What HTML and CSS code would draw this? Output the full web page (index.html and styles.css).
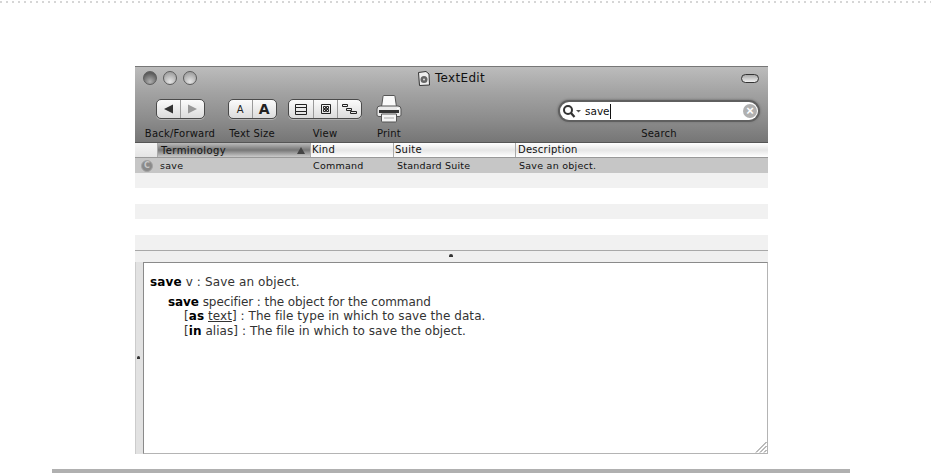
FILE: index.html
```html
<!DOCTYPE html>
<html lang="en">
<head>
<meta charset="utf-8">
<title>TextEdit</title>
<link rel="stylesheet" href="styles.css">
</head>
<body>
<div class="dots"></div>
<div class="window">
  <div class="toolbar">
    <div class="titlebar">
      <div class="lights"><i class="light red"></i><i class="light"></i><i class="light"></i></div>
      <div class="title">
        <svg class="doc" width="13" height="15" viewBox="0 0 13 15"><path d="M1.500 1.500 9 .5l3 2.500.5 11-10 .5z" fill="#eee" stroke="#333"/><circle cx="7" cy="8.500" r="3.500" fill="#666"/><circle cx="7" cy="8.500" r="1" fill="#ddd"/></svg>
        <span>TextEdit</span>
      </div>
      <div class="pill"></div>
    </div>
    <div class="tools">
      <div class="tool t-back">
        <div class="seg">
          <div class="cell c-nav"><svg width="11" height="10" viewBox="0 0 11 10"><path d="M1 5l9-4.500v9z" fill="#333"/></svg></div>
          <div class="cell c-nav"><svg width="11" height="10" viewBox="0 0 11 10"><path d="M10 5L1 .5v9z" fill="#999"/></svg></div>
        </div>
        <span class="label">Back/Forward</span>
      </div>
      <div class="tool t-size">
        <div class="seg">
          <div class="cell c-a small">A</div>
          <div class="cell c-a big">A</div>
        </div>
        <span class="label">Text Size</span>
      </div>
      <div class="tool t-view">
        <div class="seg">
          <div class="cell c-view"><svg width="12" height="13" viewBox="0 0 12 13" fill="none" stroke="#222"><path d="M.5 1.500h11v3H.5zM.5 4.500h11v4H.5zM.5 8.500h11v3H.5z"/></svg></div>
          <div class="cell c-view"><svg width="12" height="12" viewBox="0 0 12 12" fill="none" stroke="#222"><path d="M1.500 1.500h9v9h-9zM3.500 3.500h2v2h-2zM6.500 3.500h2v2h-2zM3.500 6.500h2v2h-2zM6.500 6.500h2v2h-2z"/></svg></div>
          <div class="cell c-view"><svg width="15" height="12" viewBox="0 0 15 12" fill="none" stroke="#222"><path d="M.5 1.500h5v2h-5zM4.500 5.500h5v2h-5zM8.500 8.500h6v2h-6z"/></svg></div>
        </div>
        <span class="label">View</span>
      </div>
      <div class="tool t-print">
        <svg class="printer" width="26" height="28" viewBox="0 0 26 28">
          <path d="M7 1.500q0-1 1-1h10q1 0 1 1L20.500 12h-15z" fill="#fafafa" stroke="#555"/>
          <path d="M1 14q0-3 3-3h18q3 0 3 3v6q0 1.500-2 1.500H3q-2 0-2-1.500z" fill="#eaeaea" stroke="#555"/>
          <path d="M3 15h20v3H3z" fill="#333"/>
          <path d="M21 13h2v1h-2z" fill="#fff"/>
          <path d="M5.500 19h15v7q0 1-1 1h-13q-1 0-1-1z" fill="#f4f4f4" stroke="#555"/>
          <path d="M8 23h10" stroke="#aaa"/>
        </svg>
        <span class="label">Print</span>
      </div>
      <div class="tool t-search">
        <div class="search">
          <svg class="glass" width="20" height="14" viewBox="0 0 20 14"><circle cx="6" cy="6" r="4" fill="none" stroke="#333" stroke-width="2"/><path d="M9 9l3.500 4" stroke="#333" stroke-width="2.200"/><path d="M14 6h5l-2.500 2.500z" fill="#555"/></svg>
          <span class="query">save</span>
          <span class="clear">×</span>
        </div>
        <span class="label">Search</span>
      </div>
    </div>
  </div>
  <div class="thead">
    <div class="th th-icon"></div>
    <div class="th th-term"><span>Terminology</span><i class="sort"></i></div>
    <div class="th th-kind">Kind</div>
    <div class="th th-suite">Suite</div>
    <div class="th th-desc">Description</div>
  </div>
  <div class="rows">
    <div class="row selected">
      <div class="td td-icon"><i class="badge">C</i></div>
      <div class="td td-term">save</div>
      <div class="td td-kind">Command</div>
      <div class="td td-suite">Standard Suite</div>
      <div class="td td-desc">Save an object.</div>
    </div>
    <div class="row alt"></div>
    <div class="row"></div>
    <div class="row alt"></div>
    <div class="row"></div>
    <div class="row alt"></div>
  </div>
  <div class="split-h"><i class="dimple"></i></div>
  <div class="lower">
    <div class="split-v"><i class="dimple"></i></div>
    <div class="doc-pane">
      <p class="head"><b>save</b> v : Save an object.</p>
      <p class="param"><b>save</b> specifier : the object for the command</p>
      <p class="opt">[<b>as</b> <u>text</u>] : The file type in which to save the data.</p>
      <p class="opt">[<b>in</b> alias] : The file in which to save the object.</p>
      <svg class="grip" width="12" height="12" viewBox="0 0 12 12" stroke="#777" fill="none"><path d="M1 11.500L11.500 1M5 11.500L11.500 5M9 11.500l2.500-2.500"/></svg>
    </div>
  </div>
</div>
<div class="rule"></div>
</body>
</html>
```

FILE: styles.css
```css
* { box-sizing: border-box; }
html, body { margin: 0; padding: 0; background: #fff; }
body { width: 931px; height: 473px; overflow: hidden; font-family: "DejaVu Sans", sans-serif; color: #222; }
.dots { height: 3px; margin-top: 1px; background: repeating-linear-gradient(90deg, #d6d6d6 0 2px, transparent 2px 6px); background-size: 100% 2px; background-repeat: no-repeat; }
.window { width: 633px; height: 388px; margin: 62px 0 0 135px; display: flex; flex-direction: column; }
.toolbar { height: 76px; flex: none; background: linear-gradient(#bcbcbc, #a2a2a2 35%, #8c8c8c 70%, #767676); border-top: 1px solid #777; }
.titlebar { height: 22px; display: flex; align-items: center; justify-content: space-between; padding: 0 9px 0 8px; }
.lights { display: flex; gap: 6px; width: 56px; }
.light { width: 14px; height: 14px; border-radius: 50%; border: 1px solid #5c5c5c; background: radial-gradient(circle at 50% 80%, #e4e4e4, #a4a4a4 75%); }
.light.red { background: radial-gradient(circle at 50% 80%, #b0b0b0, #5c5c5c 75%); }
.title { display: flex; align-items: center; gap: 5px; font-size: 12px; letter-spacing: .3px; color: #111; }
.pill { width: 18px; height: 9px; margin-left: 38px; border: 1px solid #333; border-radius: 5px; background: linear-gradient(#a8a8a8, #f0f0f0); }
.tools { display: flex; height: 53px; }
.tool { display: flex; flex-direction: column; align-items: center; flex: none; }
.t-back { width: 76px; margin-left: 7px; }
.t-size { width: 60px; margin-left: 4px; }
.t-view { width: 74px; margin-left: 6px; }
.t-print { width: 40px; margin-left: 7px; }
.t-search { width: 206px; margin-left: 147px; }
.seg { height: 20px; margin-top: 10px; display: flex; border: 1px solid #4a4a4a; border-radius: 5px; background: linear-gradient(#fbfbfb, #dcdcdc); overflow: hidden; box-shadow: 0 1px 0 #b4b4b4; }
.cell { display: flex; align-items: center; justify-content: center; border-left: 1px solid #999; }
.cell:first-child { border-left: 0; }
.c-nav { width: 23.500px; }
.c-a { width: 23.500px; color: #222; }
.small { font-size: 10px; }
.big { font-size: 14px; font-weight: bold; }
.c-view { width: 24px; }
.label { font-size: 10px; line-height: 13px; margin-top: 8px; color: #111; white-space: nowrap; letter-spacing: .2px; }
.printer { margin-top: 6px; }
.t-print .label { margin-top: 4px; }
.search { width: 198px; height: 18px; margin-top: 13px; display: flex; align-items: center; padding: 0 1px 0 2px; background: #fff; border-radius: 9px; box-shadow: 0 0 0 2px #5f5f5f, 0 0 2px 3px #808080; }
.glass { flex: none; }
.query { font-size: 10.500px; color: #111; margin-left: 3px; border-right: 1px solid #111; line-height: 15px; flex: none; }
.clear { margin-left: auto; width: 14px; height: 14px; border-radius: 50%; background: #b0b0b0; color: #fff; font-size: 13px; font-weight: bold; line-height: 14px; text-align: center; font-family: "Liberation Sans", sans-serif; }
.t-search .label { margin-top: 7px; }
.thead { height: 16px; flex: none; display: flex; background: linear-gradient(#fff, #e6e6e6 50%, #fff); border-bottom: 1px solid #999; border-top: 1px solid #555; }
.th { font-size: 10px; line-height: 13px; padding-left: 1px; border-right: 1px solid #aaa; color: #111; flex: none; letter-spacing: .25px; }
.th-icon { width: 23px; padding: 0; background: linear-gradient(#f4f4f4, #e4e4e4); }
.th-term { width: 153px; display: flex; justify-content: space-between; align-items: center; background: linear-gradient(#bbb, #777 50%, #ccc); padding: 0 5px 0 3px; letter-spacing: .4px; }
.sort { width: 0; height: 0; border-left: 4px solid transparent; border-right: 4px solid transparent; border-bottom: 7px solid #444; }
.th-kind { width: 83px; }
.th-suite { width: 122px; }
.th-desc { flex: 1; border-right: 0; padding-left: 2px; }
.rows { height: 92px; flex: none; background: #fff; }
.row { height: 15.400px; display: flex; }
.row.alt { background: #f1f1f1; }
.row.selected { background: #c6c6c6; height: 15px; }
.td { font-size: 9.500px; line-height: 15px; padding-left: 2px; color: #111; white-space: nowrap; letter-spacing: .25px; flex: none; }
.td-icon { width: 23px; padding: 0 0 0 6px; display: flex; align-items: center; }
.td-term { width: 153px; }
.td-kind { width: 83px; }
.td-suite { width: 122px; padding-left: 3px; letter-spacing: .2px; }
.td-desc { padding-left: 3px; }
.badge { width: 12px; height: 12px; border-radius: 50%; background: #8a8a8a; border: 1px solid #a4a4a4; color: #c8c8c8; font-style: normal; font-size: 8px; line-height: 10px; text-align: center; font-weight: bold; }
.split-h { height: 12px; flex: none; background: #efefef; border-top: 1px solid #a8a8a8; display: flex; justify-content: center; }
.dimple { width: 4px; height: 3px; background: #333; border-radius: 2px 2px 0 0; display: block; }
.split-h .dimple { margin: 3px 0 0 -1px; }
.lower { flex: 1; display: flex; min-height: 0; }
.split-v { width: 8px; flex: none; background: #e2e2e2; border-left: 1px solid #ccc; display: flex; align-items: center; }
.split-v .dimple { width: 3px; height: 3px; margin: 0 0 2px 1px; }
.doc-pane { flex: 1; position: relative; background: #fff; border: 1px solid #b4b4b4; border-left-color: #8a8a8a; border-top-color: #8a8a8a; font-size: 12px; padding: 12px 0 0 6px; color: #333; }
.doc-pane p { margin: 0; line-height: 14.500px; white-space: nowrap; }
.doc-pane b { color: #000; }
.head { margin-bottom: 5px !important; letter-spacing: .13px; }
.param { padding-left: 18px; letter-spacing: -.07px; }
.opt { padding-left: 34px; letter-spacing: .06px; }
.grip { position: absolute; right: 0; bottom: 0; }
.rule { width: 798px; height: 4px; margin: 15px 0 0 52px; background: #b0b0b0; }
```
